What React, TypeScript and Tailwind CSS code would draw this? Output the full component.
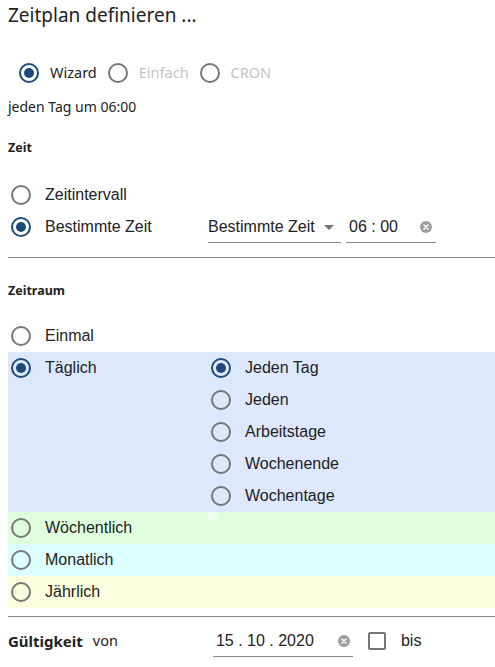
import React from 'react';

const ui = "[font-family:'Noto_Sans',sans-serif]";

const Radio: React.FC<{ checked?: boolean }> = ({ checked }) => (
  <span
    className={`flex h-5 w-5 shrink-0 items-center justify-center rounded-full border-2 ${
      checked ? 'border-[#1d4a7a]' : 'border-[#767676]'
    }`}
  >
    {checked && <span className="h-[10px] w-[10px] rounded-full bg-[#1d4a7a]" />}
  </span>
);

const ClearIcon: React.FC = () => (
  <svg width="12" height="12" viewBox="0 0 12 12">
    <circle cx="6" cy="6" r="6" fill="#9e9e9e" />
    <path d="M4 4l4 4M8 4l-4 4" stroke="#fff" strokeWidth="1.6" strokeLinecap="round" />
  </svg>
);

// one option row in the left column
const Row: React.FC<{ label: string; checked?: boolean; children?: React.ReactNode; className?: string }> = ({
  label,
  checked,
  children,
  className = '',
}) => (
  <div className={`flex ${className}`}>
    <div className="flex h-8 w-[200px] shrink-0 items-center">
      <span className="ml-[3px]">
        <Radio checked={checked} />
      </span>
      <span className="ml-[14px]">{label}</span>
    </div>
    {children}
  </div>
);

const SubRow: React.FC<{ label: string; checked?: boolean }> = ({ label, checked }) => (
  <div className="flex h-8 items-center">
    <span className="ml-[3px]">
      <Radio checked={checked} />
    </span>
    <span className="ml-[14px]">{label}</span>
  </div>
);

const App: React.FC = () => {
  const modes = [
    { label: 'Wizard', checked: true },
    { label: 'Einfach', disabled: true },
    { label: 'CRON', disabled: true },
  ];

  return (
    <div className="min-h-[667px] bg-white pl-2 text-[#222] [font-family:'Liberation_Sans',Arial,sans-serif] text-[16px]">
      <h1 className={`${ui} h-[30px] pt-[1px] text-[19px] leading-[28px] font-normal`}>Zeitplan definieren ...</h1>

      {/* mode switch */}
      <div className={`${ui} mt-[27px] flex h-8 items-center pl-[11px] text-[14.5px]`}>
        {modes.map((m) => (
          <div key={m.label} className="mr-[11px] flex items-center">
            <Radio checked={m.checked} />
            <span className={`ml-[11px] ${m.disabled ? 'text-[#c4c4c4]' : ''}`}>{m.label}</span>
          </div>
        ))}
      </div>
      <div className={`${ui} mt-[6px] h-6 text-[14px] leading-6`}>jeden Tag um 06:00</div>

      {/* Zeit */}
      <div className={`${ui} mt-[17px] h-[24px] text-[12.5px] leading-[24px] font-bold`}>Zeit</div>
      <div className="mt-[19px]">
        <Row label="Zeitintervall" />
        <Row label="Bestimmte Zeit" checked>
          <div className="flex h-8 items-end">
            <div className="flex h-[32px] w-[133px] items-center border-b border-[#8a8a8a] pt-[1px]">
              <span>Bestimmte Zeit</span>
              <svg className="ml-auto mr-[7px]" width="10" height="5" viewBox="0 0 10 5">
                <path d="M0 0h10L5 5z" fill="#757575" />
              </svg>
            </div>
            <div className="ml-[5px] flex h-[32px] w-[90px] items-center border-b border-[#8a8a8a] pl-[3px] pr-[3px] pt-[1px]">
              <span>06 : 00</span>
              <span className="ml-auto mr-[1px]">
                <ClearIcon />
              </span>
            </div>
          </div>
        </Row>
      </div>
      <div className="mt-[14px] h-px bg-[#8a8a8a]" />

      {/* Zeitraum */}
      <div className={`${ui} mt-[21px] h-[24px] text-[12.5px] leading-[24px] font-bold`}>Zeitraum</div>
      <div className="mt-[17px]">
        <Row label="Einmal" />
        <Row label="Täglich" checked className="bg-[#dde8fc]">
          <div className="flex flex-col">
            <SubRow label="Jeden Tag" checked />
            <SubRow label="Jeden" />
            <SubRow label="Arbeitstage" />
            <SubRow label="Wochenende" />
            <SubRow label="Wochentage" />
          </div>
        </Row>
        <div className="relative">
          <Row label="Wöchentlich" className="bg-[#defede]" />
          <span className="absolute left-[200px] top-0 h-[8px] w-[10px] bg-[#effff0]" />
        </div>
        <Row label="Monatlich" className="bg-[#dcfefe]" />
        <Row label="Jährlich" className="bg-[#fbfedd]" />
      </div>
      <div className="mt-[8px] h-px bg-[#8a8a8a]" />

      {/* Gültigkeit */}
      <div className="mt-[8px] flex h-8 items-center">
        <span className={`${ui} text-[15px] font-bold`}>Gültigkeit</span>
        <span className={`${ui} ml-[10px] text-[14.5px]`}>von</span>
        <div className="ml-[95px] flex h-8 items-end">
          <div className="flex h-[32px] w-[140px] items-center border-b border-[#8a8a8a] pl-[3px] pt-[1px]">
            <span>15 . 10 . 2020</span>
            <span className="ml-auto mr-[3px]">
              <ClearIcon />
            </span>
          </div>
        </div>
        <span className="ml-[15px] h-[18px] w-[18px] rounded-[2px] border-2 border-[#767676]" />
        <span className="ml-[15px]">bis</span>
      </div>
    </div>
  );
};

export default App;
